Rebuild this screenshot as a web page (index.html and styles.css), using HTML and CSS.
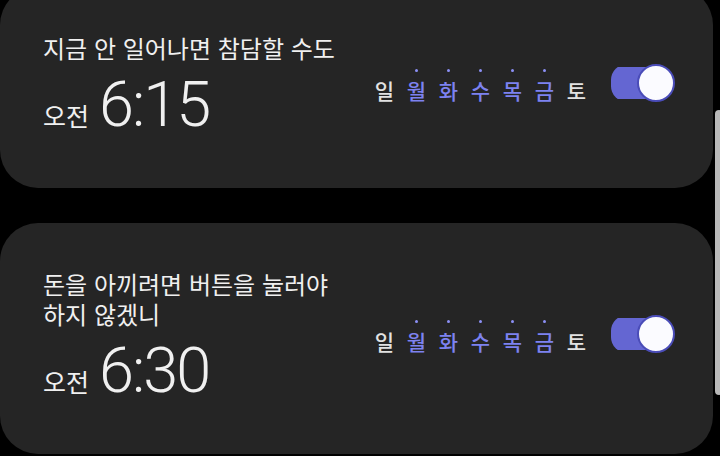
FILE: index.html
```html
<!DOCTYPE html>
<html lang="ko">
<head>
<meta charset="utf-8">
<link rel="stylesheet" href="styles.css">
</head>
<body>
<div class="list">
  <section class="card card-first">
    <div class="info">
      <div class="title">지금 안 일어나면 참담할 수도</div>
      <div class="time"><span class="ampm">오전</span><span class="clock">6:15</span></div>
    </div>
    <div class="controls">
      <div class="days">
        <span class="day">일</span>
        <span class="day on">월</span>
        <span class="day on">화</span>
        <span class="day on">수</span>
        <span class="day on">목</span>
        <span class="day on">금</span>
        <span class="day">토</span>
      </div>
      <div class="switch"><span class="thumb"></span></div>
    </div>
  </section>
  <section class="card">
    <div class="info">
      <div class="title"><span class="line">돈을 아끼려면 버튼을 눌러야</span><span class="line">하지 않겠니</span></div>
      <div class="time"><span class="ampm">오전</span><span class="clock">6:30</span></div>
    </div>
    <div class="controls">
      <div class="days">
        <span class="day">일</span>
        <span class="day on">월</span>
        <span class="day on">화</span>
        <span class="day on">수</span>
        <span class="day on">목</span>
        <span class="day on">금</span>
        <span class="day">토</span>
      </div>
      <div class="switch"><span class="thumb"></span></div>
    </div>
  </section>
</div>
<div class="scrollbar"></div>
</body>
</html>
```
FILE: styles.css
```css
html, body {
  margin: 0;
  padding: 0;
  background: #000;
  width: 720px;
  height: 456px;
  overflow: hidden;
  font-family: "Noto Sans CJK KR", "Noto Sans", sans-serif;
  color: #f0f0f0;
}

.list {
  display: flex;
  flex-direction: column;
  gap: 35px;
}

.card {
  width: 713px;
  box-sizing: border-box;
  background: #252525;
  border-radius: 38px;
  display: flex;
  align-items: center;
  justify-content: space-between;
  padding: 46px 38px 51px 43px;
}

.card-first {
  margin-top: -13px;
}

.info {
  display: flex;
  flex-direction: column;
}

.title {
  display: flex;
  flex-direction: column;
  font-size: 24px;
  line-height: 30px;
  font-weight: 400;
}

.line {
  display: block;
  height: 30px;
}

.time {
  display: flex;
  align-items: baseline;
  margin-top: 10px;
}

.ampm {
  font-size: 25px;
  line-height: 30px;
  margin-right: 10px;
}

.clock {
  font-family: Roboto, "Noto Sans", sans-serif;
  font-weight: 300;
  font-size: 63px;
  line-height: 64px;
  letter-spacing: -2px;
}

.controls {
  display: flex;
  align-items: center;
  gap: 24px;
}

.days {
  display: flex;
  gap: 11px;
  margin-left: -2px;
}

.day {
  display: flex;
  flex-direction: column;
  align-items: center;
  font-size: 21px;
  line-height: 24px;
  font-weight: 500;
  color: #e2e2e2;
  width: 21px;
}

.day::before {
  content: "";
  width: 3px;
  height: 3px;
  border-radius: 50%;
  background: transparent;
  margin-bottom: 6px;
}

.day.on {
  color: #7d82f0;
}

.day.on::before {
  background: #8c90f6;
}

.switch {
  width: 64px;
  height: 38px;
  display: flex;
  align-items: center;
  justify-content: flex-end;
  background: linear-gradient(#6466d2, #6466d2) left center / 50px 32px no-repeat;
  border-radius: 16px;
  margin-bottom: 4px;
}

.thumb {
  width: 34px;
  height: 34px;
  border-radius: 50%;
  background: #fbfbff;
  border: 2px solid #4a4cb8;
}

.scrollbar {
  position: absolute;
  left: 715px;
  top: 110px;
  width: 8px;
  height: 285px;
  border-radius: 4px;
  background: #b9b9b9;
}
```
